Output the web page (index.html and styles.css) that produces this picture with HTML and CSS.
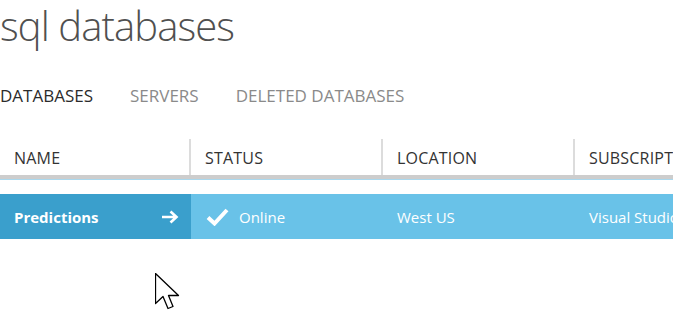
FILE: index.html
```html
<!DOCTYPE html>
<html>
<head>
<title>sql databases</title>
<link rel="stylesheet" href="styles.css">
</head>
<body>
<div class="client_area">
	<h1 class="page_title">sql databases</h1>
	<div class="tabs">
		<span class="tab tab_active">DATABASES</span>
		<span class="tab">SERVERS</span>
		<span class="tab">DELETED DATABASES</span>
	</div>
	<div class="grid_head">
		<div class="head_cell">NAME</div>
		<div class="head_cell head_sep">STATUS</div>
		<div class="head_cell head_sep">LOCATION</div>
		<div class="head_cell head_sep">SUBSCRIPTION</div>
	</div>
	<div class="grid_row">
		<div class="row_cell name_cell">
			<span>Predictions</span>
			<svg class="go_icon" width="18" height="14" viewBox="0 0 18 14"><path d="M1 7H15M9.5 1.5L15.5 7L9.5 12.5" fill="none" stroke="#fff" stroke-width="2.6"/></svg>
		</div>
		<div class="row_cell">
			<svg class="ok_icon" width="23" height="18" viewBox="0 0 23 18"><path d="M2 9.5L8.5 15.5L21 2" fill="none" stroke="#fff" stroke-width="4"/></svg>
			<span>Online</span>
		</div>
		<div class="row_cell">West US</div>
		<div class="row_cell">Visual Studio Ultimate with MSDN</div>
	</div>
	<svg class="cursor" width="26" height="40" viewBox="0 0 26 40"><path d="M0.5 0.5V30.5L8 23.5L13 35.5L18 33.5L13.5 22.5H23.5Z" fill="#fff" stroke="#000" stroke-width="1.3" stroke-linejoin="round"/></svg>
</div>
</body>
</html>
```

FILE: styles.css
```css
body
{
	margin : 0;
	font-family : "Open Sans", "Liberation Sans", sans-serif;
	background-color : white;
	overflow : hidden;
}
.client_area
{
	position : relative;
	width : 673px;
	height : 328px;
	overflow : hidden;
}
.page_title
{
	margin : 0;
	font-size : 40px;
	font-weight : 300;
	line-height : 52px;
	color : #505050;
	letter-spacing : -0.9px;
}
.tabs
{
	display : flex;
	gap : 37px;
	margin-top : 32px;
	font-size : 17px;
	line-height : 24px;
}
.tab
{
	color : #8a8a8a;
}
.tab_active
{
	color : #2b2b2b;
}
.grid_head
{
	display : grid;
	grid-template-columns : 189px 192px 192px 1fr;
	margin-top : 31px;
	border-bottom : 4px solid #cdcdcd;
	box-shadow : 0 1px 0 #a9d8ee;
}
.head_cell
{
	height : 36px;
	padding-left : 14px;
	font-size : 16px;
	line-height : 38px;
	letter-spacing : 0.2px;
	color : #333;
	white-space : nowrap;
	overflow : hidden;
}
.head_sep
{
	border-left : 2px solid #dcdcdc;
}
.grid_row
{
	display : grid;
	grid-template-columns : 191px 192px 192px 1fr;
	margin-top : 15px;
	height : 45px;
	background-color : #69c2e8;
	color : #fff;
	font-size : 15px;
}
.row_cell
{
	display : flex;
	align-items : center;
	padding-left : 14px;
	white-space : nowrap;
	overflow : hidden;
}
.name_cell
{
	justify-content : space-between;
	padding-right : 12px;
	background-color : #3a9fcc;
	font-weight : 700;
}
.ok_icon
{
	margin-left : 1px;
	margin-right : 10px;
}
.cursor
{
	position : absolute;
	left : 155px;
	top : 273px;
}
```
